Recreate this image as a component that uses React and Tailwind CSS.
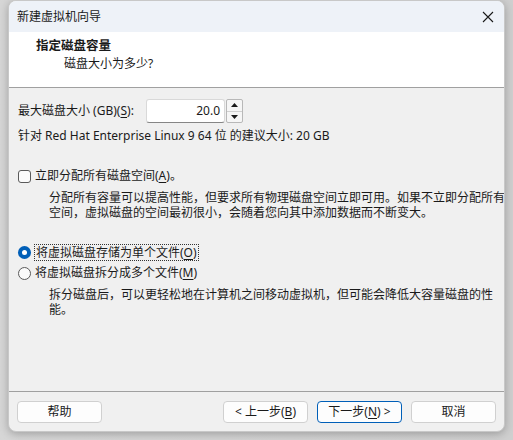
import React from 'react'

const font = { fontFamily: '"Noto Sans", "Noto Sans CJK SC", sans-serif' }

function Btn({ children, primary }) {
  return (
    <button
      className={`h-[22px] w-[85px] rounded-[4px] bg-[#fdfdfd] text-[12px] leading-none text-[#1a1a1a] border ${
        primary ? 'border-[#005fb8]' : 'border-[#d0d0d0]'
      }`}
    >
      {children}
    </button>
  )
}

function U({ children }) {
  return <span className="underline underline-offset-2">{children}</span>
}

export default function App() {
  return (
    <div className="w-[513px] h-[440px] bg-gradient-to-r from-[#d6d6d6] to-[#cfcfcf] pl-[8px] overflow-hidden" style={font}>
      <div className="w-[497px] h-[432px] rounded-[8px] bg-[#f0f0f0] flex flex-col overflow-hidden border border-[#c8c8c8] shadow-[0_2px_8px_rgba(0,0,0,0.25)] text-[#1a1a1a]">
        {/* Title bar */}
        <div className="h-[31px] shrink-0 bg-[#eef2f8] flex items-center justify-between pl-[8px] pr-[9px]">
          <span className="text-[12px]">新建虚拟机向导</span>
          <svg width="12" height="12" viewBox="0 0 12 12" className="mr-[1px]">
            <path d="M1 1 L11 11 M11 1 L1 11" stroke="#1a1a1a" strokeWidth="1.1" />
          </svg>
        </div>

        {/* Header */}
        <div className="h-[56px] shrink-0 bg-white border-b border-[#a0a0a0] pl-[27px] pt-[5px]">
          <div className="text-[12.5px] font-bold leading-[18px]">指定磁盘容量</div>
          <div className="text-[12px] leading-[17px] pl-[28px]">磁盘大小为多少?</div>
        </div>

        {/* Body */}
        <div className="flex-1 pl-[9px] pr-[4px] text-[12px] whitespace-nowrap">
          <div className="flex items-center mt-[11px] h-[24px]">
            <span className="w-[128px]">
              最大磁盘大小 (GB)(<U>S</U>):
            </span>
            <div className="flex h-[24px]">
              <div className="w-[79px] h-[24px] bg-white border border-[#d9d9d9] border-b-[#868686] rounded-[3px] flex items-center justify-end pr-[4px]">
                20.0
              </div>
              <div className="w-[17px] h-[24px] ml-[1px] flex flex-col border border-[#b8b8b8] rounded-[2px] bg-[#f6f6f6]">
                <div className="flex-1 flex items-center justify-center border-b border-[#d0d0d0]">
                  <svg width="7" height="4" viewBox="0 0 7 4"><path d="M0 4 L3.5 0 L7 4 Z" fill="#1a1a1a" /></svg>
                </div>
                <div className="flex-1 flex items-center justify-center">
                  <svg width="7" height="4" viewBox="0 0 7 4"><path d="M0 0 L3.5 4 L7 0 Z" fill="#1a1a1a" /></svg>
                </div>
              </div>
            </div>
          </div>

          <div className="mt-[5px] leading-[16px]">针对 Red Hat Enterprise Linux 9 64 位 的建议大小: 20 GB</div>

          <div className="flex items-center mt-[24px] h-[16px]">
            <span className="w-[13px] h-[13px] rounded-[3px] border border-[#5a5a5a] bg-[#fbfbfb] mr-[4px]" />
            <span>
              立即分配所有磁盘空间(<U>A</U>)。
            </span>
          </div>
          <div className="pl-[31px] mt-[6px] leading-[15px]">
            <div>分配所有容量可以提高性能，但要求所有物理磁盘空间立即可用。如果不立即分配所有</div>
            <div>空间，虚拟磁盘的空间最初很小，会随着您向其中添加数据而不断变大。</div>
          </div>

          <div className="flex items-center mt-[23px] h-[18px]">
            <span className="w-[13px] h-[13px] rounded-full bg-[#005fb8] flex items-center justify-center mr-[3px]">
              <span className="w-[5px] h-[5px] rounded-full bg-white" />
            </span>
            <span className="border border-dotted border-[#333] px-[1px] leading-[15px]">
              将虚拟磁盘存储为单个文件(<U>O</U>)
            </span>
          </div>
          <div className="flex items-center mt-[3px] h-[18px]">
            <span className="w-[13px] h-[13px] rounded-full border border-[#5a5a5a] bg-[#fbfbfb] mr-[4px]" />
            <span>
              将虚拟磁盘拆分成多个文件(<U>M</U>)
            </span>
          </div>
          <div className="pl-[31px] mt-[5px] leading-[15px]">
            <div>拆分磁盘后，可以更轻松地在计算机之间移动虚拟机，但可能会降低大容量磁盘的性</div>
            <div>能。</div>
          </div>
        </div>

        {/* Footer */}
        <div className="h-[40px] shrink-0 border-t border-[#a0a0a0] flex items-start pt-[9px] pl-[8px] pr-[8px]">
          <Btn>帮助</Btn>
          <div className="flex-1" />
          <div className="flex gap-[9px]">
            <Btn>&lt; 上一步(<U>B</U>)</Btn>
            <Btn primary>下一步(<U>N</U>) &gt;</Btn>
            <Btn>取消</Btn>
          </div>
        </div>
      </div>
    </div>
  )
}
